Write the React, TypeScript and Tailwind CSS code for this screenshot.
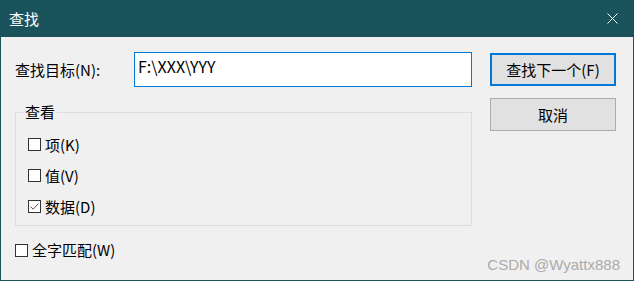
import React from "react";

const font = "font-['Noto_Sans_CJK_SC',sans-serif]";

function CheckBox({ checked = false, label }: { checked?: boolean; label: string }) {
  return (
    <div className="flex items-center gap-[4px]">
      <div className="w-[13px] h-[13px] border border-[#333333] bg-white flex items-center justify-center">
        {checked && (
          <svg width="11" height="11" viewBox="0 0 11 11">
            <path d="M1.5 5.5 L4.2 8.2 L9.5 2.5" fill="none" stroke="#555555" strokeWidth="1" />
          </svg>
        )}
      </div>
      <span className="text-[15px] leading-[20px] text-black">{label}</span>
    </div>
  );
}

export default function App() {
  return (
    <div className={`w-[634px] h-[281px] bg-[#1b535c] flex flex-col ${font}`}>
      {/* title bar */}
      <div className="h-[37px] flex items-center justify-between pl-[9px] pr-[16px]">
        <span className="text-white text-[15px] leading-[20px]">查找</span>
        <svg width="11" height="11" viewBox="0 0 11 11">
          <path d="M0.5 0.5 L10.5 10.5 M10.5 0.5 L0.5 10.5" stroke="#ffffff" strokeWidth="1" />
        </svg>
      </div>

      {/* body */}
      <div className="relative flex-1 mx-[1px] mb-[1px] bg-[#f0f0f0] flex pl-[14px] pt-[15px]">
        <div className="w-[457px] flex flex-col">
          <div className="flex items-center h-[35px]">
            <span className="w-[119px] text-[15px] leading-[20px] text-black">查找目标(N):</span>
            <div className="w-[338px] h-[35px] border border-[#0078d7] bg-white pl-[3px] pt-[3px] text-[16px] leading-[20px] text-black">
              F:\XXX\YYY
            </div>
          </div>

          <div className="relative mt-[25px] h-[114px] border border-[#dcdcdc] pl-[12px] pt-[16px] pb-[3px] flex flex-col">
            <span className="absolute left-[7px] top-[-11px] px-[2px] bg-[#f0f0f0] text-[15px] leading-[20px] text-black">
              查看
            </span>
            <div className="h-[31px] flex items-center">
              <CheckBox label="项(K)" />
            </div>
            <div className="h-[31px] flex items-center">
              <CheckBox label="值(V)" />
            </div>
            <div className="h-[31px] flex items-center">
              <CheckBox checked label="数据(D)" />
            </div>
          </div>

          <div className="mt-[9px] h-[30px] flex items-center">
            <CheckBox label="全字匹配(W)" />
          </div>
        </div>

        <div className="ml-[18px] pt-[1px] flex flex-col gap-[12px]">
          <button className="w-[126px] h-[33px] border-2 border-[#0078d7] bg-[#e1e1e1] text-[15px] leading-[20px] text-black">
            查找下一个(F)
          </button>
          <button className="w-[126px] h-[33px] border border-[#adadad] bg-[#e1e1e1] text-[15px] leading-[20px] text-black">
            取消
          </button>
        </div>

        <span className="absolute right-[13px] bottom-[7px] font-['Liberation_Sans',sans-serif] text-[15px] leading-[16px] text-[#ababab]">
          CSDN @Wyattx888
        </span>
      </div>
    </div>
  );
}
